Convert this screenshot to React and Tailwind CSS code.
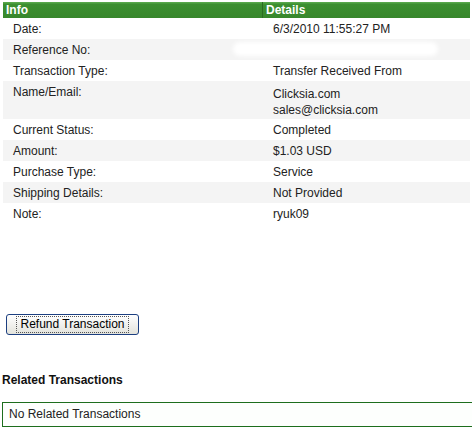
import React from "react";

const rows = [
  { label: "Date:", value: ["6/3/2010 11:55:27 PM"] },
  { label: "Reference No:", value: [], hidden: true },
  { label: "Transaction Type:", value: ["Transfer Received From"] },
  { label: "Name/Email:", value: ["Clicksia.com", "sales@clicksia.com"] },
  { label: "Current Status:", value: ["Completed"] },
  { label: "Amount:", value: ["$1.03 USD"] },
  { label: "Purchase Type:", value: ["Service"] },
  { label: "Shipping Details:", value: ["Not Provided"] },
  { label: "Note:", value: ["ryuk09"] },
];

export default function App() {
  return (
    <div className="w-[472px] h-[436px] overflow-hidden bg-white font-['Liberation_Sans',Arial,sans-serif] text-[12px] text-[#222]">
      {/* transaction details */}
      <div className="pl-[3px] pr-[2px] pt-[2px]">
        <div className="flex h-[16px] bg-gradient-to-b from-[#5fae52] from-[0%] via-[#3c8f30] via-[15%] to-[#37872c] font-bold text-white leading-[16px]">
          <div className="w-[260px] pl-[3px] border-r border-[#2a6b22]">Info</div>
          <div className="pl-[3px]">Details</div>
        </div>

        {rows.map((r, i) => (
          <div
            key={i}
            className={`flex leading-[16px] ${
              r.value.length > 1 ? "h-[38px] pt-[3px]" : "h-[21px] items-center"
            } ${i % 2 === 1 ? "bg-[#f4f4f4]" : "bg-white"}`}
          >
            <div className="w-[260px] pl-[10px]">{r.label}</div>
            <div className="pl-[10px] relative flex-1 self-stretch flex flex-col justify-center">
              {r.hidden && (
                <div className="absolute left-[-30px] top-[3px] w-[205px] h-[14px] rounded-full bg-white blur-[2px]" />
              )}
              {r.value.map((v, j) => (
                <div key={j}>{v}</div>
              ))}
            </div>
          </div>
        ))}
      </div>

      {/* refund */}
      <div className="pl-[6px] pt-[90px]">
        <button className="h-[21px] w-[133px] rounded-[3px] border border-[#1c3f80] bg-gradient-to-b from-white to-[#e3e3dc] text-[12px] leading-[15px] text-black">
          <span className="inline-block border border-dotted border-[#555] px-[3px]">Refund Transaction</span>
        </button>
      </div>

      {/* related */}
      <div className="pl-[2px] pt-[38px] font-bold text-[12px] leading-[14px] text-[#111]">
        Related Transactions
      </div>
      <div className="ml-[2px] mt-[15px] h-[25px] border border-[#1d6e1d] border-r-0 bg-[#fdfffd] pl-[6px] leading-[23px] text-[12px] text-[#222]">
        No Related Transactions
      </div>
    </div>
  );
}
